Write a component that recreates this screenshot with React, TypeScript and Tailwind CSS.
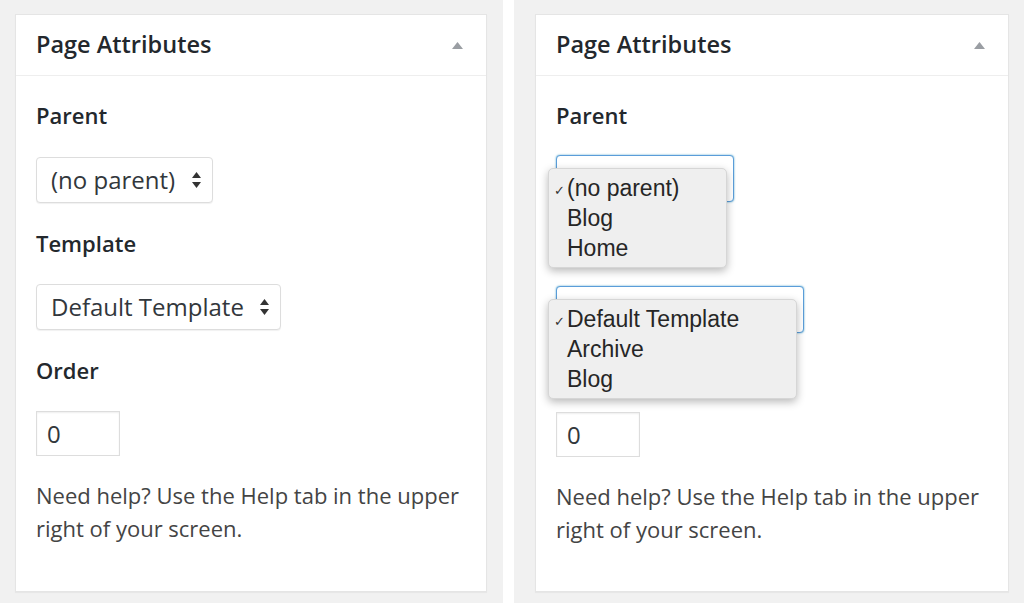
import React from 'react';

const PARENTS = ['(no parent)', 'Blog', 'Home'];
const TEMPLATES = ['Default Template', 'Archive', 'Blog'];

function Arrows() {
  return (
    <svg width="9" height="16" viewBox="0 0 9 16" className="shrink-0">
      <polygon points="4.5,0 9,6 0,6" fill="#333" />
      <polygon points="0,10 9,10 4.5,16" fill="#333" />
    </svg>
  );
}

function Menu({ items, width }: { items: string[]; width: string }) {
  return (
    <div
      className={`absolute left-[-9px] top-[12px] ${width} z-10 rounded-[5px] bg-[#efefef] border border-[#d6d6d6] shadow-[0_3px_8px_rgba(0,0,0,0.28)] py-[4px] font-['Liberation_Sans',Arial,sans-serif] text-[23px] text-[#262626]`}
    >
      {items.map((item, i) => (
        <div key={item} className="relative h-[30px] flex items-center pl-[18px]">
          {i === 0 && (
            <span className="absolute left-[5px] top-[8px] text-[13px] font-['DejaVu_Sans',sans-serif] text-[#333]">
              ✓
            </span>
          )}
          {item}
        </div>
      ))}
    </div>
  );
}

function Select({ value, width, items, menuWidth, open }: {
  value: string; width: string; items: string[]; menuWidth: string; open: boolean;
}) {
  if (open) {
    return (
      <div className={`relative ${width} h-[47px] rounded-[4px] border border-[#5b9dd9] bg-white shadow-[0_0_2px_rgba(30,140,190,0.8)]`}>
        <Menu items={items} width={menuWidth} />
      </div>
    );
  }
  return (
    <div
      className={`${width} h-[46px] flex items-center justify-between rounded-[4px] border border-[#ddd] bg-white shadow-[0_1px_1px_rgba(0,0,0,0.06)] pl-[14px] pr-[11px] text-[24px] text-[#32373c]`}
    >
      <span>{value}</span>
      <Arrows />
    </div>
  );
}

function Panel({ open = false }: { open?: boolean }) {
  return (
    <div className="h-[578px] bg-white border border-[#e5e5e5] shadow-[0_1px_1px_rgba(0,0,0,0.04)]">
      {/* Header */}
      <div className="h-[61px] flex items-center justify-between pl-[20px] pr-[23px] border-b border-[#eee]">
        <h2 className="text-[23.5px] font-semibold text-[#23282d]">Page Attributes</h2>
        <svg width="11" height="7" viewBox="0 0 11 7">
          <polygon points="5.5,0 11,7 0,7" fill="#9a9ea3" />
        </svg>
      </div>

      {/* Body */}
      <div className="px-[20px] pt-[25px] text-[#23282d]">
        <p className="text-[22px] leading-[28px] font-semibold">Parent</p>
        <div className={open ? 'mt-[26px]' : 'mt-[28px]'}>
          <Select value="(no parent)" width={open ? 'w-[178px]' : 'w-[177px]'} items={PARENTS} menuWidth="w-[179px]" open={open} />
        </div>

        <p className="mt-[26px] text-[22px] leading-[28px] font-semibold">Template</p>
        <div className={open ? 'mt-[30px]' : 'mt-[27px]'}>
          <Select value="Default Template" width={open ? 'w-[248px]' : 'w-[245px]'} items={TEMPLATES} menuWidth="w-[249px]" open={open} />
        </div>

        <p className={`${open ? 'mt-[24px]' : 'mt-[26px]'} text-[22px] leading-[28px] font-semibold`}>Order</p>
        <div className="mt-[27px] w-[84px] h-[45px] flex items-center pl-[10px] border border-[#ddd] bg-white shadow-[inset_0_1px_2px_rgba(0,0,0,0.07)] text-[24px] text-[#32373c]">
          0
        </div>

        <p className="mt-[23px] text-[22px] leading-[33px] text-[#444]">
          Need help? Use the Help tab in the upper right of your screen.
        </p>
      </div>
    </div>
  );
}

export default function App() {
  return (
    <div className="w-[1024px] h-[609px] bg-white flex gap-[11px] font-['Open_Sans',sans-serif]">
      <div className="w-[503px] h-[603px] bg-[#f1f1f1] pt-[14px] pl-[15px] pr-[16px]">
        <Panel />
      </div>
      <div className="flex-1 h-[603px] bg-[#f1f1f1] pt-[14px] pl-[21px] pr-[15px]">
        <Panel open />
      </div>
    </div>
  );
}
